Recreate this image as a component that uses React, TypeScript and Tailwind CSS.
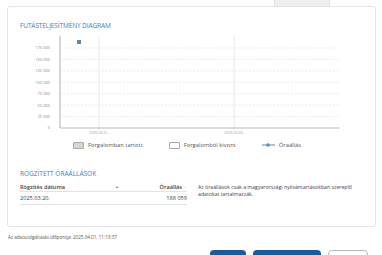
import React from 'react';

const ticks = [175000, 150000, 125000, 100000, 75000, 50000, 25000, 0];
const yOf = (v: number) => 96 - (v / 25000) * 11.43;
const fmt = (v: number) => (v === 0 ? '0' : `${Math.floor(v / 1000)} 000`);

function Chart() {
  return (
    <svg width="343" height="105" className="block" style={{ fontFamily: '"Open Sans", sans-serif' }}>
      {ticks.map((t) => (
        <g key={t}>
          <text x="30" y={yOf(t) + 1.4} fontSize="4" fill="#888" textAnchor="end">
            {fmt(t)}
          </text>
          {t !== 0 && (
            <line x1="40" x2="320" y1={yOf(t)} y2={yOf(t)} stroke="#e6e6e6" strokeWidth="0.8" strokeDasharray="2 1.5" />
          )}
        </g>
      ))}
      <line x1="40" x2="40" y1="4" y2="96" stroke="#999" strokeWidth="0.8" />
      <line x1="79" x2="79" y1="4" y2="98" stroke="#e3e3e3" strokeWidth="0.8" />
      <line x1="214" x2="214" y1="4" y2="98" stroke="#e3e3e3" strokeWidth="0.8" />
      <line x1="40" x2="320" y1="96" y2="96" stroke="#aaa" strokeWidth="0.8" />
      <text x="79" y="101.5" fontSize="3.6" fill="#999" textAnchor="middle">2025.03.21.</text>
      <text x="214" y="101.5" fontSize="3.6" fill="#999" textAnchor="middle">2025.03.26.</text>
      <rect x="57" y="8" width="4" height="4" fill="#5a88bb" />
    </svg>
  );
}

export default function App() {
  return (
    <div className="w-[382px] h-[255px] overflow-hidden bg-white text-[#444]" style={{ fontFamily: '"Open Sans", sans-serif' }}>
      <div className="h-[6px] flex">
        <div className="ml-[274px] w-[56px] h-[6px] bg-[#efefef] border-x border-[#e2e2e2]" />
      </div>
      <div className="ml-[7px] w-[369px] h-[221px] border border-[#e4e4e4] rounded-[3px] pl-[12px] pt-[14px]">
        <div className="text-[6.5px] leading-[9px] text-[#3f80bd] tracking-[-0.1px]">FUTÁSTELJESÍTMÉNY DIAGRAM</div>
        <div className="mt-[2px]">
          <Chart />
        </div>
        <div className="flex items-center gap-[26px] ml-[53px] mt-[4px] text-[5.8px] leading-[8px] text-[#555]">
          <div className="flex items-center gap-[4px]">
            <span className="w-[11px] h-[7px] bg-[#d6d6d6] border border-[#a8a8a8] rounded-[1px]" />
            <span>Forgalomban tartott</span>
          </div>
          <div className="flex items-center gap-[4px]">
            <span className="w-[11px] h-[7px] bg-white border border-[#a8a8a8] rounded-[1px]" />
            <span>Forgalomból kivont</span>
          </div>
          <div className="flex items-center gap-[4px]">
            <svg width="13" height="6">
              <line x1="0" x2="13" y1="3" y2="3" stroke="#5a88bb" strokeWidth="1" />
              <rect x="4.5" y="1.5" width="3" height="3" fill="#5a88bb" />
            </svg>
            <span>Óraállás</span>
          </div>
        </div>
        <div className="mt-[20px] text-[6.5px] leading-[9px] text-[#3f80bd]">RÖGZÍTETT ÓRAÁLLÁSOK</div>
        <div className="flex mt-[5px]">
          <div className="w-[167px] text-[5.6px]">
            <div className="flex items-center h-[8px] border-b border-[#e2e2e2] box-content">
              <span className="font-semibold text-[#444]">Rögzítés dátuma</span>
              <span className="ml-[50px] text-[4px] text-[#888]">▲</span>
              <span className="ml-auto font-semibold text-[#444]">Óraállás</span>
              <span className="ml-[2px] mr-[1px] text-[4px] text-[#bbb]">↕</span>
            </div>
            <div className="flex items-center h-[13px] border-b border-[#e2e2e2] text-[#444]">
              <span>2025.03.20.</span>
              <span className="ml-auto">188 059</span>
            </div>
          </div>
          <div className="ml-[11px] mt-[1px] w-[170px] text-[5.2px] leading-[7px] text-[#444]">
            Az óraállások csak a magyarországi nyilvántartásokban szereplő adatokat tartalmazzák.
          </div>
        </div>
      </div>
      <div className="ml-[8px] mt-[7px] text-[4.6px] leading-[6px] text-[#555]">
        Az adatszolgáltatás időpontja: 2025.04.01. 11:13:37
      </div>
      <div className="flex mt-[10px] ml-[210px] gap-[7px]">
        <div className="w-[36px] h-[12px] rounded-[4px] bg-[#1d5a9b]" />
        <div className="w-[68px] h-[12px] rounded-[4px] bg-[#1d5a9b]" />
        <div className="w-[40px] h-[12px] rounded-[4px] border border-[#bbb] bg-white" />
      </div>
    </div>
  );
}
